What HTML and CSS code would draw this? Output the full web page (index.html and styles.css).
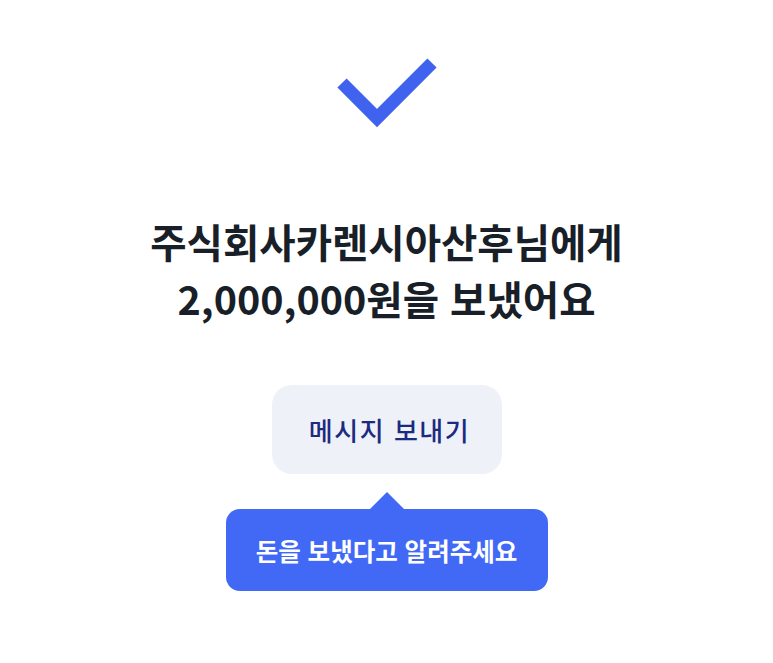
FILE: index.html
```html
<!DOCTYPE html>
<html lang="ko">
<head>
<meta charset="utf-8">
<link rel="stylesheet" href="styles.css">
</head>
<body>
<main class="page">
  <svg class="check" width="100" height="72" viewBox="0 0 100 72">
    <polyline points="5,27 40,62 95,7" fill="none" stroke="#3f63ef" stroke-width="13"/>
  </svg>
  <h1 class="title">주식회사카렌시아산후님에게<br>2,000,000원을 보냈어요</h1>
  <button class="msg-btn">메시지 보내기</button>
  <div class="tooltip">
    <span class="arrow"></span>
    <span class="tip-text">돈을 보냈다고 알려주세요</span>
  </div>
</main>
</body>
</html>
```
FILE: styles.css
```css
html, body {
  margin: 0;
  padding: 0;
  background: #ffffff;
}
body {
  font-family: "Noto Sans CJK KR", "Noto Sans", sans-serif;
}
.page {
  display: flex;
  flex-direction: column;
  align-items: center;
  padding-top: 56px;
}
.check {
  display: block;
}
.title {
  margin: 84px 0 0;
  font-size: 39.5px;
  line-height: 57px;
  font-weight: 700;
  color: #191f28;
  text-align: center;
  letter-spacing: 0;
}
.msg-btn {
  margin-top: 59px;
  width: 230px;
  height: 89px;
  border: none;
  border-radius: 20px;
  background: #eef1f8;
  color: #1b2b80;
  font-family: "Noto Sans CJK KR", "Noto Sans", sans-serif;
  font-size: 26px;
  font-weight: 500;
  letter-spacing: 1.5px;
  padding: 0 0 0 6px;
}
.tooltip {
  position: relative;
  margin-top: 35px;
  width: 322px;
  height: 82px;
  border-radius: 14px;
  background: #4169f5;
  display: flex;
  align-items: center;
  justify-content: center;
}
.arrow {
  position: absolute;
  top: -17px;
  left: 50%;
  margin-left: -18px;
  width: 0;
  height: 0;
  border-left: 18px solid transparent;
  border-right: 18px solid transparent;
  border-bottom: 18px solid #4169f5;
}
.tip-text {
  color: #ffffff;
  font-size: 24.5px;
  font-weight: 700;
  letter-spacing: 0;
}
```
